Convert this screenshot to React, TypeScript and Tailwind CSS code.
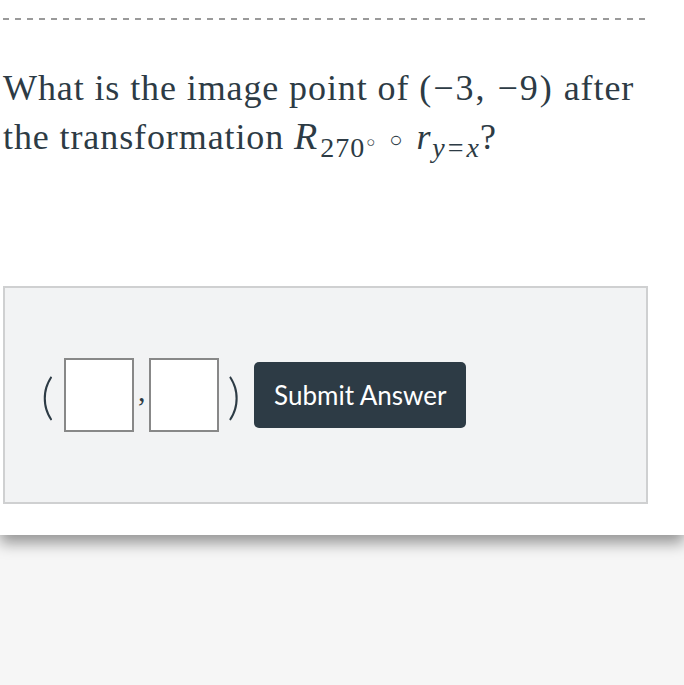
import React from "react";

const serif = { fontFamily: '"Liberation Serif", "DejaVu Serif", serif' };
const lato = { fontFamily: "Lato, sans-serif" };

const Sub: React.FC<{ children: React.ReactNode }> = ({ children }) => (
  <span className="text-[28px] relative top-[8px] leading-none tracking-[1px]">{children}</span>
);

const App: React.FC = () => {
  return (
    <div className="w-[684px] h-[685px] bg-[#f6f6f6] overflow-hidden">
      {/* Card */}
      <div className="bg-white h-[535px] shadow-[0_8px_14px_rgba(0,0,0,0.4)] relative">
        <div className="pt-[18px] pl-[3px] pr-[35px]">
          <div className="h-[2px] bg-[repeating-linear-gradient(90deg,#9a9a9a_0_6px,transparent_6px_12px)]" />
        </div>

        {/* Question */}
        <p
          className="mt-[44px] pl-[3px] text-[36px] leading-[48px] tracking-[0.9px] text-[#2d3b45] whitespace-nowrap"
          style={serif}
        >
          What is the image point of <span className="tracking-[2px]">(−3, −9)</span> after
          <br />
          the transformation <i className="text-[38px] pr-[2px]">R</i>
          <Sub>
            270<span className="text-[15px] relative -top-[10px] ml-[1px]">○</span>
          </Sub>
          <span className="text-[22px] mx-[13px] relative -top-[2px]">○</span>
          <i className="pr-[1px]">r</i>
          <Sub>
            <i>y</i>
            <span className="mx-[2px]">=</span>
            <i>x</i>
          </Sub>
          ?
        </p>

        {/* Answer box */}
        <div className="mt-[120px] ml-[3px] w-[645px] h-[218px] bg-[#f2f3f4] border-2 border-[#cfd0d1] flex items-center pl-[36px]">
          <div className="flex items-center text-[#2d3b45]">
            <span className="text-[50px] font-light leading-none mr-[10px]" style={lato}>
              (
            </span>
            <div className="w-[70px] h-[74px] bg-white border-2 border-[#888]" />
            <span className="text-[30px] leading-none mx-[4px] relative -top-[4px]" style={serif}>
              ,
            </span>
            <div className="w-[70px] h-[74px] bg-white border-2 border-[#888]" />
            <span className="text-[50px] font-light leading-none ml-[8px]" style={lato}>
              )
            </span>
          </div>
          <button
            className="ml-[14px] w-[212px] h-[66px] bg-[#2d3b45] text-white rounded-[5px] text-[26px]"
            style={lato}
          >
            Submit Answer
          </button>
        </div>
      </div>
    </div>
  );
};

export default App;
